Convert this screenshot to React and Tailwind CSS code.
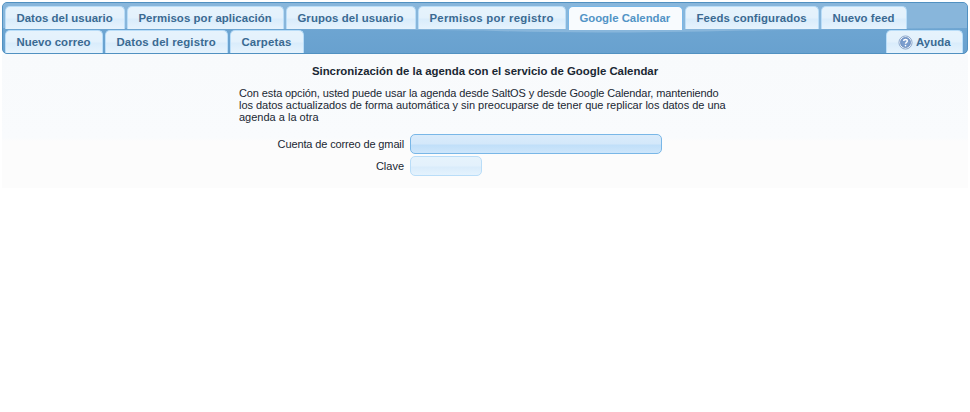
const topTabs = [
  { label: 'Datos del usuario', box: 'w-[120px]', text: 'tracking-[0.05px]' },
  { label: 'Permisos por aplicación', box: 'w-[157px]', text: 'tracking-[0.08px]' },
  { label: 'Grupos del usuario', box: 'w-[130px]', text: 'tracking-[0.1px]' },
  { label: 'Permisos por registro', box: 'w-[148px]', text: 'tracking-[0.28px]' },
  { label: 'Google Calendar', box: 'w-[115px]', active: true, text: 'tracking-[-0.02px]' },
  { label: 'Feeds configurados', box: 'w-[134px]', text: 'tracking-[0.12px]' },
  { label: 'Nuevo feed', box: 'w-[86px]', text: 'tracking-[0.08px]' },
];

const bottomTabs = [
  { label: 'Nuevo correo', box: 'w-[98px]', text: 'tracking-[0.06px]' },
  { label: 'Datos del registro', box: 'w-[123px]', text: 'tracking-[0.14px]' },
  { label: 'Carpetas', box: 'w-[74px]', text: 'tracking-[0.16px]' },
];

function Tab({ label, box, active, icon, text = 'tracking-normal' }) {
  const look = active
    ? 'h-6 border-[#79b7e7] bg-[#f8fbfe] text-[#5294c6]'
    : 'h-[23px] border-[#b9ddf8] bg-[linear-gradient(#e6f3fc_0px,#e3f1fc_11px,#d9ecfb_12px,#e6f3fd_22px)] text-[#3a6a92]';
  return (
    <div
      className={`flex shrink-0 items-center gap-[3px] whitespace-nowrap rounded-t-[5px] border border-b-0 text-[11.4px] font-bold leading-[13px] ${icon ? 'pl-[11px]' : 'pl-[10.4px]'} ${box} ${look}`}
    >
      {icon}
      <span className={text}>{label}</span>
    </div>
  );
}

function HelpIcon() {
  return (
    <svg width="15" height="15" viewBox="0 0 16 16" className="shrink-0">
      <circle cx="8" cy="8" r="7" fill="#eef3fa" stroke="#8aa5ca" strokeWidth="1" />
      <circle cx="8" cy="8" r="5.3" fill="#7c9dcd" stroke="#5b80b6" strokeWidth="0.8" />
      <path d="M6 6.5C6 4.2 10 4.2 10 6.5C10 8 8 7.8 8 9.4" fill="none" stroke="#fff" strokeWidth="1.5" />
      <circle cx="8" cy="11.3" r="0.9" fill="#fff" />
    </svg>
  );
}

function TabBar() {
  return (
    <div className="relative h-[52px] overflow-hidden rounded-[5px] border border-[#5191c1] bg-[#6ea6d2] bg-[linear-gradient(#73a9d4,#68a1cf)]">
      <svg className="absolute inset-0" width="964" height="50" viewBox="0 0 964 50" preserveAspectRatio="none">
        <path d="M0 0H964V25Q840 26 740 27.5Q580 31.5 480 27.5Q350 25.5 0 25Z" fill="#88b6db" />
      </svg>
      <div className="relative flex h-6 gap-[2px] pl-[2px] pt-[3px]">
        {topTabs.map((t) => (
          <Tab key={t.label} {...t} />
        ))}
      </div>
      <div className="relative flex gap-[2px] pl-[2px] pr-[4px] pt-[3px]">
        {bottomTabs.map((t) => (
          <Tab key={t.label} {...t} />
        ))}
        <div className="flex-1" />
        <Tab label="Ayuda" box="w-[77px]" icon={<HelpIcon />} text="tracking-[0.05px]" />
      </div>
    </div>
  );
}

export default function App() {
  return (
    <div className="h-[412px] bg-white px-[2px] pt-[2px] font-['Liberation_Sans',Arial,sans-serif] text-[11px] text-[#1a2733]">
      <TabBar />
      <main className="h-[134px] bg-[linear-gradient(#f8fafc_0px,#f9fbfd_84px,#fcfcfc_87px,#fcfcfc_134px)] pt-[11px]">
        <h1 className="text-center text-[11.4px] font-bold leading-[13px]">
          Sincronización de la agenda con el servicio de Google Calendar
        </h1>
        <p className="ml-[237px] mt-[9px] whitespace-nowrap leading-3">
          <span className="tracking-[-0.11px]">
            Con esta opción, usted puede usar la agenda desde SaltOS y desde Google Calendar, manteniendo
          </span>
          <br />
          <span className="tracking-[-0.025px]">
            los datos actualizados de forma automática y sin preocuparse de tener que replicar los datos de una
          </span>
          <br />
          <span>agenda a la otra</span>
        </p>
        <form className="mt-[11px] grid grid-cols-[402px_252px] items-center gap-x-[6px] gap-y-[2px]">
          <label htmlFor="account" className="text-right tracking-[-0.13px]">Cuenta de correo de gmail</label>
          <input
            id="account"
            className="h-5 w-[252px] rounded-[5px] border border-[#79b7e7] bg-[linear-gradient(#d9ebfb_0px,#d4e8fa_9px,#c0dff9_10px,#d0e7fb_19px)] outline-none"
          />
          <label htmlFor="key" className="text-right">Clave</label>
          <input
            id="key"
            className="h-5 w-[72px] rounded-[5px] border border-[#b9ddf8] bg-[linear-gradient(#e6f3fc_0px,#e3f1fc_9px,#d9ecfb_10px,#e6f3fd_19px)] outline-none"
          />
        </form>
      </main>
    </div>
  );
}
